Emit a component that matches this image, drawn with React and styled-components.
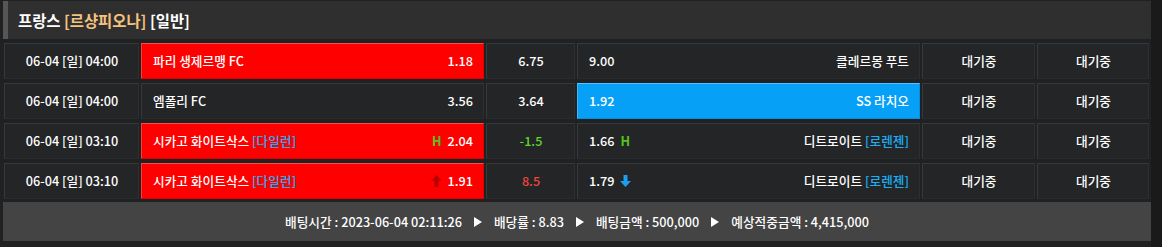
import React from "react";
import styled, { createGlobalStyle, css } from "styled-components";

const Global = createGlobalStyle`
  html, body { margin: 0; padding: 0; background: #1a1a1a; }
  body { font-family: "Noto Sans CJK KR", "Noto Sans", sans-serif; color: #fff; }
  * { box-sizing: border-box; }
`;

const Panel = styled.div`
  width: 1151px;
  padding: 1px 0 6px 3px;
  background: #202123;
`;

const Header = styled.div`
  height: 38px;
  background: #2f2f2f;
  border-left: 5px solid #565656;
  display: flex;
  align-items: center;
  padding-left: 10px;
  font-size: 15.4px;
  font-weight: 700;
`;

const Gold = styled.span`
  color: #f3c27f;
`;

const List = styled.div`
  display: flex;
  flex-direction: column;
  gap: 4px;
  margin: 4px 2px 3px 1px;
`;

const Row = styled.div`
  display: grid;
  grid-template-columns: 135px 343px 89px 343px 113px 112px;
  column-gap: 2px;
  height: 36px;
`;

const Cell = styled.div`
  display: flex;
  align-items: center;
  justify-content: ${(p) => p.$justify || "center"};
  padding: 0 10px 0 11px;
  font-size: 12.7px;
  font-weight: 500;
  line-height: 1;
  background: #242527;
  border: 1px solid #38393b;
  border-bottom-color: #2a2b2d;
  border-right-color: #2e2f31;
  color: #fff;
  white-space: nowrap;
  ${(p) =>
    p.$tone === "red" &&
    css`
      background: #ff0000;
      border-color: #ff4a4a #e00000 #e00000 #ff3a3a;
    `}
  ${(p) =>
    p.$tone === "blue" &&
    css`
      background: #06a0f6;
      border-color: #55c2ff #0590de #0590de #40b8fb;
    `}
`;

const Side = styled.span`
  display: flex;
  align-items: center;
  gap: 6px;
`;

const Bracket = styled.span`
  color: #18b0f8;
`;

const Mark = styled.span`
  color: #54c51c;
  font-weight: 700;
`;

const Line = styled.span`
  color: ${(p) => p.$color};
`;

const Footer = styled.div`
  height: 39px;
  background: #444444;
  display: flex;
  align-items: center;
  justify-content: center;
  gap: 12px;
  font-size: 12.7px;
  font-weight: 500;
  color: #fff;
`;

const Tri = styled.span`
  width: 0;
  height: 0;
  border-top: 5px solid transparent;
  border-bottom: 5px solid transparent;
  border-left: 8px solid #fff;
`;

const Arrow = ({ dir, color }) => (
  <svg width="11" height="12" viewBox="0 0 10 11" style={{ transform: dir === "down" ? "rotate(180deg)" : "none" }}>
    <path d="M5 0 L10 5.5 L6.8 5.5 L6.8 11 L3.2 11 L3.2 5.5 L0 5.5 Z" fill={color} />
  </svg>
);

const rows = [
  {
    date: "06-04 [일] 04:00",
    home: "파리 생제르맹 FC",
    homeOdd: "1.18",
    homeTone: "red",
    draw: "6.75",
    awayOdd: "9.00",
    away: "클레르몽 푸트",
  },
  {
    date: "06-04 [일] 04:00",
    home: "엠폴리 FC",
    homeOdd: "3.56",
    draw: "3.64",
    awayOdd: "1.92",
    away: "SS 라치오",
    awayTone: "blue",
  },
  {
    date: "06-04 [일] 03:10",
    home: "시카고 화이트삭스",
    homeSub: "[다일런]",
    homePre: <Mark>H</Mark>,
    homeOdd: "2.04",
    homeTone: "red",
    draw: <Line $color="#5fd62a">-1.5</Line>,
    awayOdd: "1.66",
    awayPost: <Mark>H</Mark>,
    away: "디트로이트",
    awaySub: "[로렌젠]",
  },
  {
    date: "06-04 [일] 03:10",
    home: "시카고 화이트삭스",
    homeSub: "[다일런]",
    homePre: <Arrow dir="up" color="#b80000" />,
    homeOdd: "1.91",
    homeTone: "red",
    draw: <Line $color="#f0443c">8.5</Line>,
    awayOdd: "1.79",
    awayPost: <Arrow dir="down" color="#1e9ef0" />,
    away: "디트로이트",
    awaySub: "[로렌젠]",
  },
];

export default function App() {
  return (
    <>
      <Global />
      <Panel>
        <Header>
          프랑스&nbsp;<Gold>[르샹피오나]</Gold>&nbsp;[일반]
        </Header>
        <List>
          {rows.map((r, i) => (
            <Row key={i}>
              <Cell>{r.date}</Cell>
              <Cell $justify="space-between" $tone={r.homeTone}>
                <span>
                  {r.home}
                  {r.homeSub && <> <Bracket>{r.homeSub}</Bracket></>}
                </span>
                <Side>
                  {r.homePre}
                  {r.homeOdd}
                </Side>
              </Cell>
              <Cell>{r.draw}</Cell>
              <Cell $justify="space-between" $tone={r.awayTone}>
                <Side>
                  {r.awayOdd}
                  {r.awayPost}
                </Side>
                <span>
                  {r.away}
                  {r.awaySub && <> <Bracket>{r.awaySub}</Bracket></>}
                </span>
              </Cell>
              <Cell>대기중</Cell>
              <Cell>대기중</Cell>
            </Row>
          ))}
        </List>
        <Footer>
          <span>배팅시간 : 2023-06-04 02:11:26</span>
          <Tri />
          <span>배당률 : 8.83</span>
          <Tri />
          <span>배팅금액 : 500,000</span>
          <Tri />
          <span>예상적중금액 : 4,415,000</span>
        </Footer>
      </Panel>
    </>
  );
}
